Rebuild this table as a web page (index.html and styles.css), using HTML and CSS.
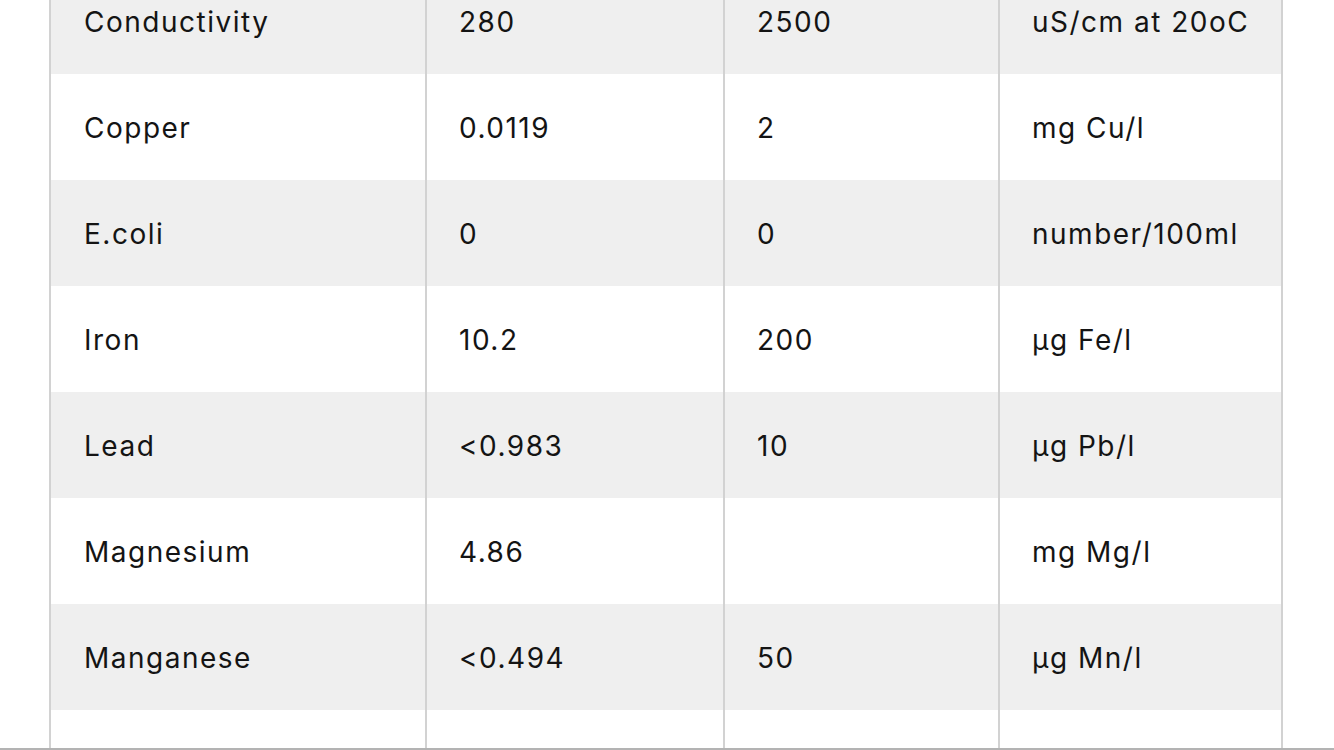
FILE: index.html
```html
<!DOCTYPE html>
<html lang="en">
<head>
<meta charset="utf-8">
<title>Water quality</title>
<link rel="stylesheet" href="styles.css">
</head>
<body>
<div class="viewport">
<table class="results">
  <colgroup>
    <col class="c1"><col class="c2"><col class="c3"><col class="c4">
  </colgroup>
  <tbody>
    <tr class="alt"><td>Conductivity</td><td>280</td><td>2500</td><td>uS/cm at 20oC</td></tr>
    <tr><td>Copper</td><td>0.0119</td><td>2</td><td>mg Cu/l</td></tr>
    <tr class="alt"><td>E.coli</td><td>0</td><td>0</td><td>number/100ml</td></tr>
    <tr><td>Iron</td><td>10.2</td><td>200</td><td>µg Fe/l</td></tr>
    <tr class="alt"><td>Lead</td><td>&lt;0.983</td><td>10</td><td>µg Pb/l</td></tr>
    <tr><td>Magnesium</td><td>4.86</td><td></td><td>mg Mg/l</td></tr>
    <tr class="alt"><td>Manganese</td><td>&lt;0.494</td><td>50</td><td>µg Mn/l</td></tr>
    <tr><td>&nbsp;</td><td></td><td></td><td></td></tr>
  </tbody>
</table>
</div>
</body>
</html>
```
FILE: styles.css
```css
html, body {
  margin: 0;
  padding: 0;
  background: #ffffff;
}
.viewport {
  height: 750px;
  overflow: hidden;
  position: relative;
}
.viewport::after {
  content: "";
  position: absolute;
  left: 0;
  right: 0;
  bottom: 0;
  height: 2px;
  background: #b3b3b3;
}
.results {
  margin: -32px 0 0 49px;
  width: 1232px;
  table-layout: fixed;
  border-collapse: collapse;
  font-family: Inter, "Liberation Sans", sans-serif;
  font-size: 28px;
  letter-spacing: 1.5px;
  color: #141414;
}
.c1 { width: 376px; }
.c2 { width: 298px; }
.c3 { width: 275px; }
.c4 { width: 283px; }
.results td {
  height: 106px;
  padding: 1px 0 0 33px;
  box-sizing: border-box;
  border-left: 2px solid #d2d2d2;
  border-right: 2px solid #d2d2d2;
  vertical-align: middle;
  white-space: nowrap;
}
.results td + td {
  padding-left: 32px;
}
.results tr.alt td {
  background: #efefef;
}
```
